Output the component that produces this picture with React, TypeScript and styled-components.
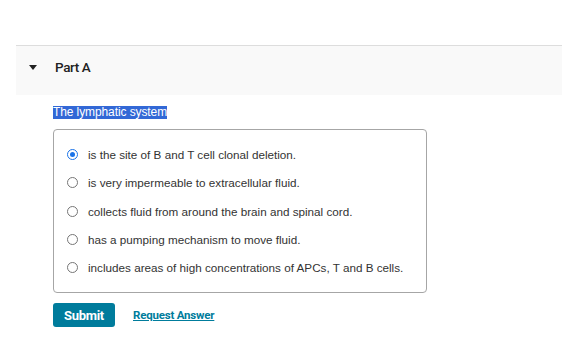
import React, { useState } from "react";
import styled, { createGlobalStyle } from "styled-components";

const GlobalStyle = createGlobalStyle`
  html, body {
    margin: 0;
    padding: 0;
    background: #ffffff;
  }
  body {
    font-family: "Liberation Sans", Arial, sans-serif;
    color: #333333;
  }
`;

const options = [
  "is the site of B and T cell clonal deletion.",
  "is very impermeable to extracellular fluid.",
  "collects fluid from around the brain and spinal cord.",
  "has a pumping mechanism to move fluid.",
  "includes areas of high concentrations of APCs, T and B cells.",
];

const Page = styled.div`
  padding-top: 45px;
`;

const PartHeader = styled.div`
  margin-left: 16px;
  height: 50px;
  display: flex;
  align-items: flex-start;
  gap: 18px;
  padding: 12px 0 0 13px;
  border-top: 1px solid #dddddd;
  background: #f9f9f9;
  box-sizing: border-box;
`;

const Caret = styled.span`
  width: 0;
  height: 0;
  border-left: 4px solid transparent;
  border-right: 4px solid transparent;
  border-top: 5px solid #222222;
  margin-top: 7px;
`;

const PartTitle = styled.span`
  font-family: Roboto, "Liberation Sans", sans-serif;
  font-weight: 500;
  font-size: 13.5px;
  line-height: 18px;
  color: #222222;
  letter-spacing: -0.4px;
`;

const Body = styled.div`
  padding: 7px 0 0 53px;
`;

const Prompt = styled.span`
  display: inline-block;
  font-family: "Liberation Sans", Arial, sans-serif;
  font-size: 12px;
  line-height: 13px;
  color: #ffffff;
  background: #3268d6;
  letter-spacing: -0.1px;
`;

const ChoiceBox = styled.div`
  margin-top: 9px;
  width: 374px;
  height: 164px;
  box-sizing: border-box;
  border: 1px solid #a6a6a6;
  border-radius: 4px;
  padding: 10.5px 0 0 13px;
  display: flex;
  flex-direction: column;
`;

const Choice = styled.label`
  display: flex;
  align-items: center;
  gap: 10px;
  height: 28.3px;
  font-size: 11.7px;
  color: #333333;
  cursor: pointer;
`;

const Radio = styled.span<{ $checked: boolean }>`
  width: 11px;
  height: 11px;
  box-sizing: border-box;
  border-radius: 50%;
  border: 1px solid ${(p) => (p.$checked ? "#1a73e8" : "#767676")};
  display: flex;
  align-items: center;
  justify-content: center;
  &::after {
    content: "";
    width: 5px;
    height: 5px;
    border-radius: 50%;
    background: ${(p) => (p.$checked ? "#1a73e8" : "transparent")};
  }
`;

const Actions = styled.div`
  display: flex;
  align-items: center;
  gap: 18px;
  margin-top: 10px;
`;

const SubmitButton = styled.button`
  width: 62px;
  height: 24px;
  border: none;
  border-radius: 3px;
  background: #007c9c;
  color: #ffffff;
  font-family: Roboto, "Liberation Sans", sans-serif;
  font-weight: 700;
  font-size: 13px;
  letter-spacing: -0.3px;
  padding: 0;
`;

const RequestLink = styled.a`
  font-family: Roboto, "Liberation Sans", sans-serif;
  font-weight: 700;
  font-size: 11.5px;
  color: #007c9c;
  text-decoration: underline;
  letter-spacing: -0.2px;
  cursor: pointer;
`;

export default function App() {
  const [selected, setSelected] = useState(0);
  return (
    <>
      <GlobalStyle />
      <Page>
        <PartHeader>
          <Caret />
          <PartTitle>Part A</PartTitle>
        </PartHeader>
        <Body>
          <Prompt>The lymphatic system</Prompt>
          <ChoiceBox>
            {options.map((text, i) => (
              <Choice key={i} onClick={() => setSelected(i)}>
                <Radio $checked={selected === i} />
                {text}
              </Choice>
            ))}
          </ChoiceBox>
          <Actions>
            <SubmitButton>Submit</SubmitButton>
            <RequestLink>Request Answer</RequestLink>
          </Actions>
        </Body>
      </Page>
    </>
  );
}
